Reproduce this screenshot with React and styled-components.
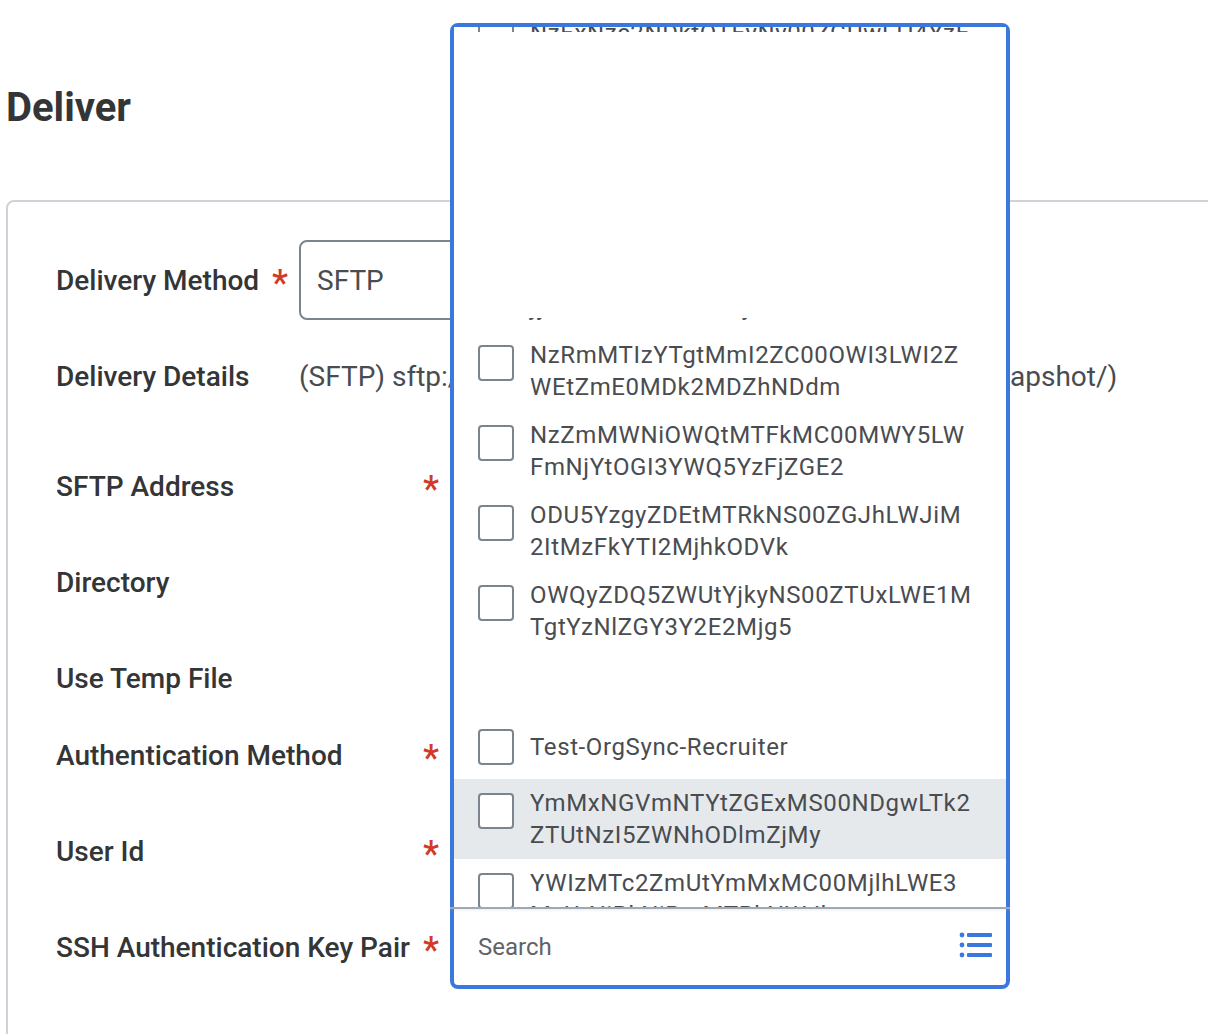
import React from "react";
import styled, { createGlobalStyle } from "styled-components";

const Global = createGlobalStyle`
  html, body { margin: 0; padding: 0; background: #fff; }
  body { font-family: Roboto, "Liberation Sans", sans-serif; overflow: hidden; }
`;
const Page = styled.div`
  position: relative;
  width: 1208px;
  height: 1034px;
  overflow: hidden;
  padding: 84px 0 0 6px;
  box-sizing: border-box;
`;
const Title = styled.h1`
  margin: 0 0 69px;
  font-size: 40px;
  line-height: 47px;
  font-weight: 700;
  color: #333537;
`;
const Card = styled.section`
  width: 1300px;
  height: 900px;
  box-sizing: border-box;
  border: 2px solid #ced3d9;
  border-radius: 8px;
  padding: 38px 0 0 48px;
`;
const Row = styled.div`
  display: flex;
  align-items: center;
  height: ${p => p.$h}px;
  margin-bottom: ${p => p.$mb}px;
`;
const Label = styled.div`
  position: relative;
  width: 243px;
  flex: none;
  font-size: 28px;
  font-weight: 500;
  color: #333537;
  white-space: nowrap;
`;
const Star = styled.span`
  position: absolute;
  left: ${p => p.$x}px;
  top: -1px;
  color: #d13a28;
  font-size: 36px;
  line-height: 40px;
  font-weight: 500;
`;
const Input = styled.div`
  width: 300px;
  height: 80px;
  box-sizing: border-box;
  border: 2px solid #7b858f;
  border-radius: 8px;
  padding: 0 16px;
  display: flex;
  align-items: center;
  font-size: 28px;
  color: #494c50;
`;
const Details = styled.div`
  font-size: 28px;
  color: #494c50;
  white-space: nowrap;
`;
const DetailsTail = styled(Details)`
  position: absolute;
  left: 1010px;
  top: 360px;
`;
const Popup = styled.div`
  position: absolute;
  left: 450px;
  top: 23px;
  width: 560px;
  height: 966px;
  box-sizing: border-box;
  background: #fff;
  border: 4px solid #3b78de;
  border-radius: 8px;
  display: flex;
  flex-direction: column;
`;
const List = styled.div`
  height: 880px;
  flex: none;
  overflow: hidden;
`;
const Clip = styled.div`
  height: ${p => p.$h}px;
  margin-bottom: ${p => p.$mb}px;
  overflow: hidden;
`;
const ClipInner = styled.div`
  margin-top: ${p => p.$t}px;
`;
const Item = styled.div`
  display: flex;
  align-items: ${p => (p.$single ? "center" : "flex-start")};
  height: ${p => (p.$single ? 64 : 80)}px;
  box-sizing: border-box;
  padding: ${p => (p.$single ? "0" : "8px")} 24px 0 24px;
  background: ${p => (p.$hover ? "#e6e9ec" : "#fff")};
`;
const Box = styled.div`
  width: 36px;
  height: 36px;
  flex: none;
  box-sizing: border-box;
  border: 2px solid #7b858f;
  border-radius: 4px;
  background: #fff;
  margin: ${p => (p.$single ? "0" : "6px")} 16px 0 0;
`;
const ItemText = styled.div`
  font-size: 24px;
  line-height: 32px;
  letter-spacing: 0.62px;
  color: #494c50;
  word-break: break-all;
  width: 443px;
`;
const FragmentText = styled(ItemText)`
  padding-left: 76px;
  white-space: nowrap;
`;
const SearchBar = styled.div`
  flex: 1;
  border-top: 2px solid #a0a8b1;
  box-shadow: inset 0 3px 3px -2px rgba(160, 175, 200, 0.25);
  display: flex;
  align-items: center;
  justify-content: space-between;
  padding: 0 17px 0 24px;
  margin: 0 -4px;
  position: relative;
  z-index: 1;
`;
const SearchText = styled.span`
  font-size: 24px;
  color: #5f6368;
  padding-left: 4px;
`;
const ListIcon = styled.svg`
  margin-bottom: 4px;
`;

const rows = [
  { label: "Delivery Method", star: 216, h: 80, mb: 24 },
  { label: "Delivery Details", h: 64, mb: 46 },
  { label: "SFTP Address", star: 367, h: 64, mb: 32 },
  { label: "Directory", h: 64, mb: 32 },
  { label: "Use Temp File", h: 64, mb: 13 },
  { label: "Authentication Method", star: 367, h: 64, mb: 32 },
  { label: "User Id", star: 367, h: 64, mb: 32 },
  { label: "SSH Authentication Key Pair", star: 367, h: 64, mb: 0 },
];

const items = [
  "NzRmMTIzYTgtMmI2ZC00OWI3LWI2ZWEtZmE0MDk2MDZhNDdm",
  "NzZmMWNiOWQtMTFkMC00MWY5LWFmNjYtOGI3YWQ5YzFjZGE2",
  "ODU5YzgyZDEtMTRkNS00ZGJhLWJiM2ItMzFkYTI2MjhkODVk",
  "OWQyZDQ5ZWUtYjkyNS00ZTUxLWE1MTgtYzNlZGY3Y2E2Mjg5",
];

export default function App() {
  return (
    <Page>
      <Global />
      <Title>Deliver</Title>
      <Card>
        {rows.map((r, i) => (
          <Row key={r.label} $h={r.h} $mb={r.mb}>
            <Label>
              {r.label}
              {r.star && <Star $x={r.star}>*</Star>}
            </Label>
            {i === 0 && <Input>SFTP</Input>}
            {i === 1 && <Details>(SFTP) sftp:/</Details>}
          </Row>
        ))}
      </Card>
      <DetailsTail>apshot/)</DetailsTail>
      <Popup>
        <List>
          <Clip $h={5} $mb={286}>
            <ClipInner $t={-18}>
              <Item>
                <Box />
                <ItemText>NzExNzc2NDktOTEyNy00ZGUwLTI4YzE</ItemText>
              </Item>
            </ClipInner>
          </Clip>
          <Clip $h={3} $mb={10}>
            <ClipInner $t={-27}>
              <FragmentText>jyMTIzNDEtMTRkNjI1NS00</FragmentText>
            </ClipInner>
          </Clip>
          {items.map(t => (
            <Item key={t}>
              <Box />
              <ItemText>{t}</ItemText>
            </Item>
          ))}
          <Clip $h={64} $mb={0} />
          <Item $single>
            <Box $single />
            <ItemText>Test-OrgSync-Recruiter</ItemText>
          </Item>
          <Item $hover>
            <Box />
            <ItemText>YmMxNGVmNTYtZGExMS00NDgwLTk2ZTUtNzI5ZWNhODlmZjMy</ItemText>
          </Item>
          <Item>
            <Box />
            <ItemText>YWIzMTc2ZmUtYmMxMC00MjlhLWE3MzUtNjBkNjBmMTBkNWJl</ItemText>
          </Item>
        </List>
        <SearchBar>
          <SearchText>Search</SearchText>
          <ListIcon width="34" height="26" viewBox="0 0 34 26" fill="#3b78de">
            <circle cx="3" cy="3" r="2.4" />
            <circle cx="3" cy="13" r="2.4" />
            <circle cx="3" cy="23" r="2.4" />
            <rect x="8" y="1" width="25" height="4" rx="1" />
            <rect x="8" y="11" width="25" height="4" rx="1" />
            <rect x="8" y="21" width="25" height="4" rx="1" />
          </ListIcon>
        </SearchBar>
      </Popup>
    </Page>
  );
}
